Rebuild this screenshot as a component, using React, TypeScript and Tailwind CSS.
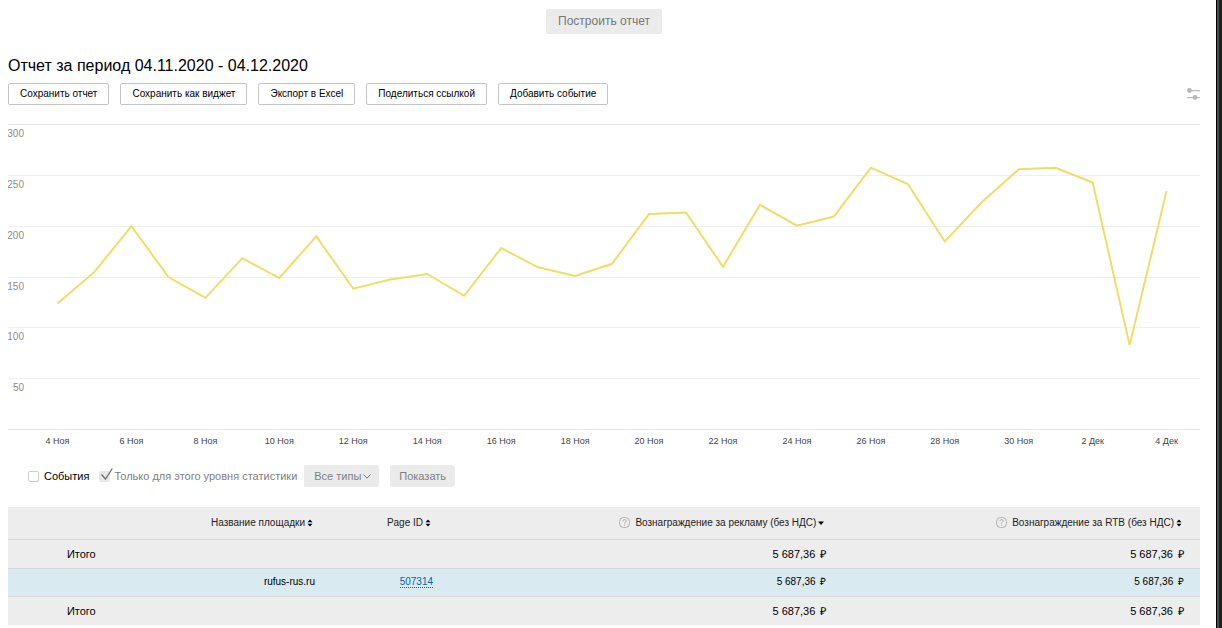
const ACTIONS = [
  "Сохранить отчет",
  "Сохранить как виджет",
  "Экспорт в Excel",
  "Поделиться ссылкой",
  "Добавить событие",
];

// one value per day, 4 Nov - 4 Dec
const VALUES = [
  124, 155, 200, 150, 129.5, 168.5, 149, 190, 138.5, 147.5, 153, 131.5, 178.5,
  159.5, 151, 163, 212, 213.5, 160, 221, 200.5, 209.5, 257.5, 241.5, 185,
  223.5, 256, 257.5, 243, 83, 234.5,
];

const GRID = [
  { label: "300", y: 0 },
  { label: "250", y: 51 },
  { label: "200", y: 102 },
  { label: "150", y: 153 },
  { label: "100", y: 203 },
  { label: "50", y: 254 },
  { label: "", y: 305 },
];

const DAYS = [
  "4 Ноя", "6 Ноя", "8 Ноя", "10 Ноя", "12 Ноя", "14 Ноя", "16 Ноя", "18 Ноя",
  "20 Ноя", "22 Ноя", "24 Ноя", "26 Ноя", "28 Ноя", "30 Ноя", "2 Дек", "4 Дек",
];

const STEP = 36.97;

function Chart() {
  const points = VALUES.map(
    (value, index) => `${49.5 + index * STEP},${305.5 - (value * 305) / 300}`
  ).join(" ");

  return (
    <svg viewBox="0 0 1192 324" className="block w-full h-auto">
      {GRID.map((line) => (
        <g key={line.y}>
          <rect
            x="0"
            y={line.y}
            width="1192"
            height="1"
            className={line.y === 0 || line.y === 305 ? "fill-[#e4e4e4]" : "fill-[#efefef]"}
          />
          <text x="16" y={line.y + 13} textAnchor="end" className="text-[10px] fill-[#8c8c8c]">
            {line.label}
          </text>
        </g>
      ))}

      <polyline points={points} fill="none" stroke="#ecde67" strokeWidth="2" />

      {DAYS.map((day, index) => (
        <text
          key={day}
          x={49.5 + index * STEP * 2}
          y="320"
          textAnchor="middle"
          className="text-[9px] fill-[#444444]"
        >
          {day}
        </text>
      ))}
    </svg>
  );
}

function SortIcon({ active = false }: { active?: boolean }) {
  return (
    <svg viewBox="0 0 6 8" className="w-[6px] h-2 fill-black">
      {active ? (
        <path d="M0 2.5h6L3 6z" />
      ) : (
        <path d="M3 0.5L5.5 3.3h-5zM0.5 4.7h5L3 7.5z" />
      )}
    </svg>
  );
}

function HelpIcon() {
  return (
    <svg viewBox="0 0 11 11" className="w-[11px] h-[11px] mr-[5px]" fill="none" stroke="#b0b0b0">
      <rect x="0.5" y="0.5" width="10" height="10" rx="4" />
      <path d="M3.9 4.3c0-2.2 3.3-2.2 3.3-.2 0 1.2-1.7 1.2-1.7 2.6M5.5 7.6v1" />
    </svg>
  );
}

function HeaderCell({ title, help, active }: { title: string; help?: boolean; active?: boolean }) {
  return (
    <th className="px-4 font-normal">
      <div className="flex items-center justify-end text-[#222222]">
        {help && <HelpIcon />}
        <button type="button" className="flex items-center gap-[2px] pr-[2px] whitespace-nowrap">
          {title}
          <SortIcon active={active} />
        </button>
      </div>
    </th>
  );
}

function Money() {
  return (
    <>
      5 687,36 <span className="ml-[2px]">₽</span>
    </>
  );
}

function TotalRow() {
  return (
    <tr className="h-[29px] border-t border-[#d9d9d9] text-[11px]">
      <td className="px-4">Итого</td>
      <td></td>
      <td></td>
      <td className="px-4"><Money /></td>
      <td className="px-4"><Money /></td>
    </tr>
  );
}

export default function App() {
  return (
    <div className="min-h-screen flex bg-white text-black text-[11px] leading-4 font-['Liberation_Sans',Arial,sans-serif]">
      <main className="flex-1 min-w-0 pl-2 pr-4 pt-[9px]">

        <div className="flex justify-center">
          <button
            type="button"
            disabled
            className="h-[25px] px-3 pb-[2px] rounded-xs bg-[#ebebeb] text-[12px] text-[#777777]"
          >
            Построить отчет
          </button>
        </div>

        <h1 className="mt-[22px] text-[16px] leading-5">
          Отчет за период 04.11.2020 - 04.12.2020
        </h1>

        <div className="mt-[7px] flex items-center justify-between">
          <div className="flex gap-[11px]">
            {ACTIONS.map((action) => (
              <button
                key={action}
                type="button"
                className="h-[22px] px-[11px] rounded-xs border border-[#c4c4c4] text-[10px] whitespace-nowrap"
              >
                {action}
              </button>
            ))}
          </div>
          <button type="button" aria-label="Настройки">
            <svg viewBox="0 0 13 12" className="w-[13px] h-3" fill="#b8b8b8">
              <rect y="2" width="13" height="1.2" />
              <circle cx="2.5" cy="2.5" r="2.4" />
              <rect y="9" width="13" height="1.2" />
              <circle cx="8" cy="9.5" r="2.4" />
            </svg>
          </button>
        </div>

        <div className="mt-[19px]">
          <Chart />
        </div>

        <div className="mt-[17px] pl-5 flex items-center">
          <label className="flex items-center gap-[5px]">
            <input
              type="checkbox"
              className="appearance-none w-[11px] h-[11px] rounded-xs border border-[#cccccc]"
            />
            События
          </label>

          <label className="ml-[10px] flex items-center gap-1 text-[#808080]">
            <span className="relative flex">
              <input
                type="checkbox"
                disabled
                defaultChecked
                className="appearance-none w-[11px] h-[11px] rounded-xs bg-[#e8e8e8]"
              />
              <svg
                viewBox="0 0 14 14"
                className="absolute left-0 bottom-0 w-[14px] h-[14px]"
                fill="none"
                stroke="#666666"
                strokeWidth="1.2"
              >
                <path d="M2.5 6.5l4 4.5L13.3 0.5" />
              </svg>
            </span>
            Только для этого уровня статистики
          </label>

          <div className="relative ml-[7px]">
            <select
              disabled
              aria-label="Тип события"
              className="block appearance-none h-[22px] w-[75px] pl-[10px] rounded-xs bg-[#ebebeb] text-[#808080] opacity-100"
            >
              <option>Все типы</option>
            </select>
            <svg
              viewBox="0 0 8 5"
              className="absolute right-2 top-[9px] w-2 h-[5px]"
              fill="none"
              stroke="#777777"
            >
              <path d="M0.5 0.5L4 4.2L7.5 0.5" />
            </svg>
          </div>

          <button
            type="button"
            disabled
            className="ml-[11px] h-[22px] px-[9px] rounded-xs bg-[#ebebeb] text-[#808080]"
          >
            Показать
          </button>
        </div>

        <table className="mt-5 w-full table-fixed border-collapse text-right bg-[#ededed]">
          <colgroup>
            <col className="w-[8.7%]" />
            <col className="w-[18.4%]" />
            <col className="w-[9.9%]" />
            <col className="w-[33%]" />
            <col className="w-[30%]" />
          </colgroup>
          <thead>
            <tr className="h-8 text-[10px]">
              <th></th>
              <HeaderCell title="Название площадки" />
              <HeaderCell title="Page ID" />
              <HeaderCell title="Вознаграждение за рекламу (без НДС)" help active />
              <HeaderCell title="Вознаграждение за RTB (без НДС)" help />
            </tr>
          </thead>
          <tbody>
            <TotalRow />
            <tr className="h-7 border-t border-[#d0dadd] bg-[#d9ebf0] text-[10px]">
              <td></td>
              <td className="px-4">rufus-rus.ru</td>
              <td className="px-4">
                <a href="#507314" className="border-b border-dotted border-[#0066a8] text-[#0066a8]">
                  507314
                </a>
              </td>
              <td className="px-4"><Money /></td>
              <td className="px-4"><Money /></td>
            </tr>
            <TotalRow />
          </tbody>
        </table>

      </main>

      <div className="w-[6px] shrink-0 border-l border-black bg-[#1e1f20]">
        <div className="w-[2px] h-full bg-[#4b4c4d]"></div>
      </div>
    </div>
  );
}
